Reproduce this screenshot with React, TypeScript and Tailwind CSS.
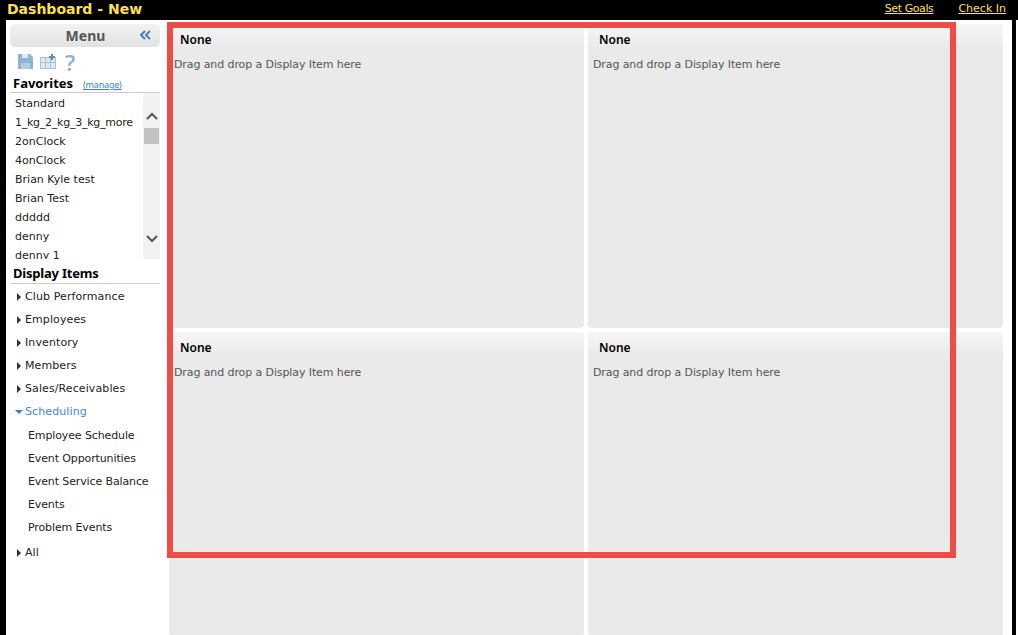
const favorites = [
  "Standard",
  "1_kg_2_kg_3_kg_more",
  "2onClock",
  "4onClock",
  "Brian Kyle test",
  "Brian Test",
  "ddddd",
  "denny",
  "denny 1",
];

const groups = ["Club Performance", "Employees", "Inventory", "Members", "Sales/Receivables"];
const scheduling = [
  "Employee Schedule",
  "Event Opportunities",
  "Event Service Balance",
  "Events",
  "Problem Events",
];

const Caret = () => (
  <svg width="4" height="8" viewBox="0 0 4 8" className="mr-[4px] shrink-0">
    <path d="M0 0L4 4L0 8Z" fill="#333" />
  </svg>
);

const CaretDown = () => (
  <svg width="8" height="4" viewBox="0 0 8 4" className="mr-[2px] ml-[-2px] shrink-0">
    <path d="M0 0H8L4 4Z" fill="#3f7fc4" />
  </svg>
);

const Panel = () => (
  <div className="bg-[#eaeaea] rounded-[4px] overflow-hidden">
    <div className="h-[24px] bg-gradient-to-b from-[#f6f6f6] to-[#eaeaea] pl-[11px] pt-[9px] font-['Noto_Sans',sans-serif] text-[12px] leading-[14px] font-semibold text-black">
      None
    </div>
    <div className="pl-[5px] pt-[10px] text-[11px] leading-[14px] tracking-[-0.1px] text-[#555]">
      Drag and drop a Display Item here
    </div>
  </div>
);

export default function App() {
  return (
    <div className="relative w-[1018px] h-[635px] overflow-hidden bg-white font-['DejaVu_Sans',sans-serif] flex flex-col">
      <div className="h-[20px] bg-black shrink-0 flex items-start justify-between pl-[7px] pr-[12px]">
        <span className="text-[14px] font-bold text-[#ffe04a] leading-[16px] mt-[1px]">Dashboard - New</span>
        <div className="flex gap-[25px] text-[11px] leading-[13px] text-[#ffe04a] mt-[2px]">
          <span className="underline tracking-[-0.4px]">Set Goals</span>
          <span className="underline">Check In</span>
        </div>
      </div>
      <div className="flex-1 flex border-l-[6px] border-r-[4px] border-black min-h-0 mr-[2px]">
        <aside className="w-[163px] shrink-0 pl-[4px] pr-[9px] pt-[4px] overflow-hidden">
          <div className="w-[150px] h-[23px] bg-gradient-to-b from-[#f2f2f2] to-[#e2e2e2] rounded-[5px] flex items-center relative">
            <span className="w-full text-center pl-[1px] font-['Noto_Sans',sans-serif] text-[14px] font-bold text-[#555]">Menu</span>
            <svg width="11" height="10" viewBox="0 0 11 10" className="absolute right-[9px] top-[6px]">
              <path d="M5 1L1 5L5 9M10 1L6 5L10 9" fill="none" stroke="#4a7fb5" strokeWidth="2" />
            </svg>
          </div>
          <div className="flex items-center gap-[7px] pl-[8px] h-[27px] pt-[2px]">
            <svg width="15" height="15" viewBox="0 0 15 15">
              <path d="M0 0H12L15 3V15H0Z" fill="#8fb2d1" />
              <rect x="4" y="0" width="6" height="4" fill="#dfe8f1" />
              <rect x="3" y="9" width="9" height="6" fill="#b5cde0" />
            </svg>
            <svg width="17" height="15" viewBox="0 0 17 15">
              <rect x="0.5" y="3.5" width="15" height="11" fill="#dfe8f1" stroke="#a9c3da" />
              <path d="M0 8.5H16M5.5 4V15M10.5 4V15" stroke="#a9c3da" />
              <path d="M12 0V6M9 3H15" stroke="#5a8fbd" strokeWidth="2" />
            </svg>
            <span className="font-['Noto_Sans',sans-serif] text-[22px] leading-[20px] font-semibold text-[#8fb2d1] ml-[1px]">?</span>
          </div>
          <div className="flex items-baseline h-[19px] pt-[1px] border-b border-[#ccc] w-[150px]">
            <span className="font-['Noto_Sans',sans-serif] text-[13px] leading-[16px] font-bold text-black ml-[3px]">Favorites</span>
            <span className="font-['Noto_Sans',sans-serif] text-[9px] tracking-[-0.2px] text-[#3b7fe0] underline ml-[10px]">(manage)</span>
          </div>
          <div className="w-[150px] h-[166px] flex overflow-hidden">
            <div className="flex-1 pl-[5px] pt-[1px] overflow-hidden">
              {favorites.map((f) => (
                <div
                  key={f}
                  className={
                    f.includes("_")
                      ? "h-[19px] text-[11px] leading-[19px] tracking-[-0.25px] text-[#222] whitespace-nowrap"
                      : "h-[19px] text-[11px] leading-[19px] text-[#222] whitespace-nowrap"
                  }
                >
                  {f}
                </div>
              ))}
            </div>
            <div className="w-[17px] bg-[#f1f1f1] flex flex-col">
              <div className="h-[35px] flex items-end justify-center pb-[8px]">
                <svg width="12" height="8" viewBox="0 0 12 8"><path d="M1 7L6 2L11 7" fill="none" stroke="#555" strokeWidth="2" /></svg>
              </div>
              <div className="h-[16px] bg-[#c1c1c1] mx-[1px]" />
              <div className="h-[115px] flex items-end justify-center pb-[16px]">
                <svg width="12" height="8" viewBox="0 0 12 8"><path d="M1 1L6 6L11 1" fill="none" stroke="#555" strokeWidth="2" /></svg>
              </div>
            </div>
          </div>
          <div className="mt-[5px] h-[20px] w-[150px] border-b border-[#ccc] pl-[3px] font-['Noto_Sans',sans-serif] text-[13px] leading-[18px] tracking-[-0.2px] font-bold text-black">
            Display Items
          </div>
          <div className="pt-[1px]">
            {groups.map((g) => (
              <div key={g} className="h-[23px] pl-[7px] flex items-center text-[11px] tracking-[0.1px] text-[#222]">
                <Caret />
                <span className="pt-[2px]">{g}</span>
              </div>
            ))}
            <div className="h-[23px] pl-[7px] flex items-center text-[11px] tracking-[0.1px] text-[#3f86e0]">
              <CaretDown />
              <span className="pt-[2px]">Scheduling</span>
            </div>
            <div className="pt-[2px]">
              {scheduling.map((s) => (
                <div key={s} className="h-[23px] pl-[18px] flex items-center text-[11px] tracking-[-0.12px] text-[#222]">{s}</div>
              ))}
            </div>
            <div className="h-[25px] pl-[7px] flex items-center text-[11px] tracking-[0.1px] text-[#222]">
              <Caret />
              <span className="pt-[2px]">All</span>
            </div>
          </div>
        </aside>
        <main className="flex-1 grid grid-cols-[415px_415px] grid-rows-[304px_304px] gap-[4px] pt-[4px]">
          <Panel />
          <Panel />
          <Panel />
          <Panel />
        </main>
      </div>
      <div className="absolute left-[167px] top-[22px] w-[789px] h-[536px] border-[6px] border-[#ef4b47]" />
    </div>
  );
}
